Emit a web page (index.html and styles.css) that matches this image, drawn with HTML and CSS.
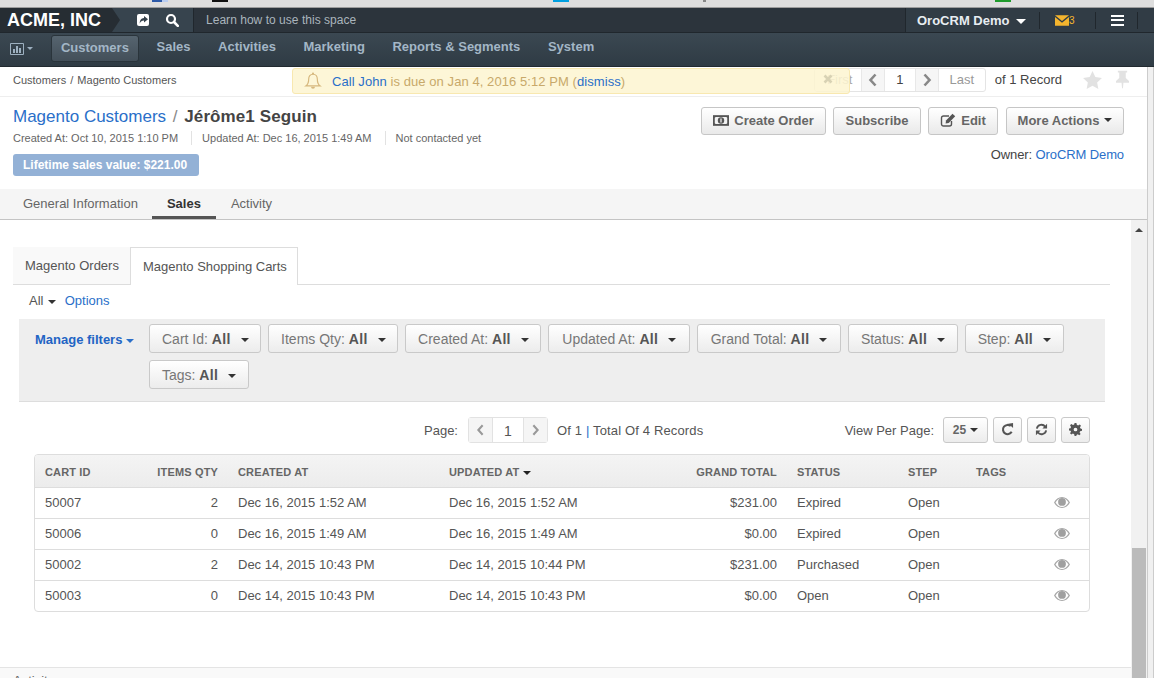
FILE: index.html
```html
<!DOCTYPE html>
<html lang="en">
<head>
  <meta charset="UTF-8">
  <meta name="viewport" content="width=device-width, initial-scale=1.0">
  <title>Magento Customers - Jérôme1 Seguin</title>
  <link rel="stylesheet" href="styles.css">
</head>
<body>
  <div class="browser-strip">
    <span class="strip-mark mark-blue"></span>
    <span class="strip-mark mark-black"></span>
    <span class="strip-mark mark-cyan"></span>
    <span class="strip-mark mark-grey"></span>
    <span class="strip-mark mark-green"></span>
  </div>

  <header class="topbar">
    <div class="logo">ACME, INC</div>
    <div class="quick-tools">
      <svg class="tool-icon" viewBox="0 0 14 14"><path fill="#fff" d="M3 1h8a2 2 0 0 1 2 2v8a2 2 0 0 1-2 2H3a2 2 0 0 1-2-2V3a2 2 0 0 1 2-2z"/><path fill="#36424c" d="M8 3l4 3.2L8 9.400V7.500C6 7.500 4.600 8.200 3.800 10.500 3.600 7.400 5 5 8 4.900z"/></svg>
      <svg class="tool-icon" viewBox="0 0 14 14"><circle cx="6" cy="6" r="4" fill="none" stroke="#fff" stroke-width="2.200"/><path d="M9 9l3.800 3.800" stroke="#fff" stroke-width="2.600" stroke-linecap="round"/></svg>
    </div>
    <div class="learn">Learn how to use this space</div>
    <div class="user-area">
      <div class="user-name">OroCRM Demo <span class="caret caret-white"></span></div>
      <div class="user-mail">
        <svg class="mail-icon" viewBox="0 0 16 12"><path fill="#f5b52e" d="M0 0h16L8 6.500zM0 2l8 6.500L16 2v10H0z"/></svg>
        <span class="mail-count">3</span>
      </div>
      <div class="user-menu">
        <span class="burger"></span>
      </div>
    </div>
  </header>

  <nav class="mainnav">
    <div class="nav-chart">
      <svg class="chart-icon" viewBox="0 0 14 12"><path fill="none" stroke="#9db0c0" d="M.5.500h13v11H.500z"/><path fill="#9db0c0" d="M3 6h2v4H3zM6 3h2v7H6zM9 5h2v5H9z"/></svg>
      <span class="caret caret-nav"></span>
    </div>
    <a class="nav-item nav-active">Customers</a>
    <a class="nav-item">Sales</a>
    <a class="nav-item">Activities</a>
    <a class="nav-item">Marketing</a>
    <a class="nav-item">Reports &amp; Segments</a>
    <a class="nav-item">System</a>
  </nav>

  <div class="page-row">
    <main class="page-main">
      <div class="crumb-row">
        <div class="crumbs">Customers <span class="crumb-sep">/</span> Magento Customers</div>
        <div class="rec-pager">
          <div class="rec-group">
            <span class="rec-cell rec-first">First</span>
            <span class="rec-cell rec-arrow"><svg class="chev" viewBox="0 0 10 14"><path d="M7.500 1.500L2.500 7l5 5.500" fill="none" stroke="#888" stroke-width="2.600"/></svg></span>
            <span class="rec-cell rec-num">1</span>
            <span class="rec-cell rec-arrow"><svg class="chev" viewBox="0 0 10 14"><path d="M2.500 1.500L7.500 7l-5 5.500" fill="none" stroke="#888" stroke-width="2.600"/></svg></span>
            <span class="rec-cell rec-last">Last</span>
          </div>
          <span class="rec-total">of 1 Record</span>
          <svg class="star-icon" viewBox="0 0 20 19"><path fill="#e2e2e2" d="M10 0l3 6.400 7 .9-5.100 4.800 1.300 6.900L10 15.600 3.800 19l1.300-6.900L0 7.300l7-.9z"/></svg>
          <svg class="pin-icon" viewBox="0 0 14 19"><path fill="#e2e2e2" d="M2 0h10v2h-1.500v6L14 11v2H8l-.5 6h-1L6 13H0v-2l3.500-3V2H2z"/></svg>
        </div>
        <div class="notice">
          <svg class="bell" viewBox="0 0 18 20"><path fill="none" stroke="#d6b77d" stroke-width="1.300" d="M9 2.500c3.200 0 4.800 2.300 4.800 5.500 0 4 1.200 6 3.200 7.500H1c2-1.500 3.200-3.500 3.200-7.500C4.200 4.800 5.800 2.500 9 2.500z"/><circle cx="9" cy="1.700" r="1.200" fill="#d6b77d"/><path fill="#d6b77d" d="M6.800 16.500h4.400a2.200 2.200 0 0 1-4.400 0z"/></svg>
          <span><a class="link">Call John</a> is due on Jan 4, 2016 5:12 PM (<a class="link">dismiss</a>)</span>
          <svg class="notice-close" viewBox="0 0 10 10"><path d="M1.500 1.500l7 7M8.500 1.500l-7 7" stroke="#d8d2b4" stroke-width="2.600"/></svg>
        </div>
      </div>

      <section class="title-block">
        <div class="title-left">
          <h1 class="page-title"><a class="link">Magento Customers</a> <span class="title-sep">/</span> <strong>Jérôme1 Seguin</strong></h1>
          <ul class="meta">
            <li>Created At: Oct 10, 2015 1:10 PM</li>
            <li>Updated At: Dec 16, 2015 1:49 AM</li>
            <li>Not contacted yet</li>
          </ul>
          <span class="sales-badge">Lifetime sales value: $221.00</span>
        </div>
        <div class="title-right">
          <div class="actions">
            <button class="btn btn-create">
              <svg class="btn-icon money" viewBox="0 0 18 12"><path fill="#555" d="M0 0h18v12H0z"/><path fill="#f2f2f2" d="M3 2h12l1 1v6l-1 1H3L2 9V3z"/><circle cx="9" cy="6" r="3.600" fill="#555"/><path fill="#f2f2f2" d="M8.300 3.800h1.400v4.400H8.300z"/></svg>
              Create Order
            </button>
            <button class="btn btn-subscribe">Subscribe</button>
            <button class="btn btn-edit">
              <svg class="btn-icon" viewBox="0 0 16 14"><path fill="none" stroke="#555" stroke-width="1.400" d="M11.500 8v3a2 2 0 0 1-2 2h-6a2 2 0 0 1-2-2V5a2 2 0 0 1 2-2H9"/><path fill="#555" d="M6 7.500L12.500.800l2.700 2.500L8.700 10 5.600 10.500z"/></svg>
              Edit
            </button>
            <button class="btn btn-more">More Actions <span class="caret caret-dark"></span></button>
          </div>
          <div class="owner">Owner: <a class="link">OroCRM Demo</a></div>
        </div>
      </section>

      <div class="section-tabs">
        <a class="section-tab">General Information</a>
        <a class="section-tab section-tab-active">Sales</a>
        <a class="section-tab">Activity</a>
      </div>

      <div class="scroll-row">
        <div class="scroll-content">
          <div class="sub-tabs">
            <a class="sub-tab">Magento Orders</a>
            <a class="sub-tab sub-tab-active">Magento Shopping Carts</a>
          </div>

          <div class="grid-toolbar">All <span class="caret caret-toolbar"></span> <a class="link options-link">Options</a></div>

          <div class="filter-bar">
            <a class="manage-filters">Manage filters <span class="caret caret-blue"></span></a>
            <div class="filter-list">
              <button class="filter-btn">Cart Id: <b>All</b><span class="caret caret-dark"></span></button>
              <button class="filter-btn">Items Qty: <b>All</b><span class="caret caret-dark"></span></button>
              <button class="filter-btn">Created At: <b>All</b><span class="caret caret-dark"></span></button>
              <button class="filter-btn filter-wide">Updated At: <b>All</b><span class="caret caret-dark"></span></button>
              <button class="filter-btn filter-wide">Grand Total: <b>All</b><span class="caret caret-dark"></span></button>
              <button class="filter-btn">Status: <b>All</b><span class="caret caret-dark"></span></button>
              <button class="filter-btn">Step: <b>All</b><span class="caret caret-dark"></span></button>
              <button class="filter-btn">Tags: <b>All</b><span class="caret caret-dark"></span></button>
            </div>
          </div>

          <div class="grid-pager">
            <span class="pager-label">Page:</span>
            <div class="pager-box">
              <span class="pager-arrow"><svg class="chev-sm" viewBox="0 0 10 14"><path d="M7.500 1.500L2.500 7l5 5.500" fill="none" stroke="#999" stroke-width="2.400"/></svg></span>
              <span class="pager-num">1</span>
              <span class="pager-arrow"><svg class="chev-sm" viewBox="0 0 10 14"><path d="M2.500 1.500L7.500 7l-5 5.500" fill="none" stroke="#999" stroke-width="2.400"/></svg></span>
            </div>
            <span class="pager-total">Of 1 <span class="pipe">|</span> Total Of 4 Records</span>
            <span class="per-page">View Per Page:</span>
            <button class="mini-btn per-btn">25 <span class="caret caret-dark"></span></button>
            <button class="mini-btn">
              <svg class="mini-icon" viewBox="0 0 14 14"><path fill="none" stroke="#555" stroke-width="2.200" d="M11.500 9.500A5 5 0 1 1 10.500 3.300"/><path fill="#555" d="M8 .8L13 0v5.500z"/></svg>
            </button>
            <button class="mini-btn">
              <svg class="mini-icon" viewBox="0 0 14 14"><path fill="none" stroke="#555" stroke-width="2" d="M2 6a5 5 0 0 1 9-2M12 8a5 5 0 0 1-9 2"/><path fill="#555" d="M13 .8v5H8zM1 13.200v-5h5z"/></svg>
            </button>
            <button class="mini-btn">
              <svg class="mini-icon" viewBox="0 0 14 14"><path fill="#555" fill-rule="evenodd" d="M6 0h2l.4 2 1.400.6L11.500 1.500 12.900 2.900 11.800 4.600l.6 1.400 1.600.4v2l-2 .4-.6 1.400 1.100 1.700-1.400 1.400-1.700-1.100-1.400.6L8 14H6l-.4-2-1.400-.6-1.700 1.100-1.400-1.400 1.100-1.700L1.600 8.400 0 8V6l1.600-.4.600-1.400-1.100-1.700L2.500 1.100l1.700 1.100 1.400-.6zM7 5a2 2 0 1 0 0 4 2 2 0 0 0 0-4z"/></svg>
            </button>
          </div>

          <div class="grid-wrap">
            <table class="grid">
              <colgroup>
                <col class="col-id"><col class="col-qty"><col class="col-created"><col class="col-updated"><col class="col-total"><col class="col-status"><col class="col-step"><col class="col-tags"><col class="col-action">
              </colgroup>
              <thead>
                <tr>
                  <th>Cart Id</th>
                  <th class="num">Items Qty</th>
                  <th>Created At</th>
                  <th>Updated At <span class="caret caret-black"></span></th>
                  <th class="num">Grand Total</th>
                  <th>Status</th>
                  <th>Step</th>
                  <th>Tags</th>
                  <th></th>
                </tr>
              </thead>
              <tbody>
                <tr>
                  <td>50007</td><td class="num">2</td><td>Dec 16, 2015 1:52 AM</td><td>Dec 16, 2015 1:52 AM</td><td class="num">$231.00</td><td>Expired</td><td>Open</td><td></td>
                  <td class="action"><svg class="eye" viewBox="0 0 16 11"><path fill="#a8a8a8" fill-rule="evenodd" d="M8 0c3.500 0 6.300 2.300 8 5.500C14.300 8.700 11.500 11 8 11S1.700 8.700 0 5.500C1.700 2.300 4.500 0 8 0zM8 1C5.300 1 3 2.800 1.500 5.500 3 8.200 5.300 10 8 10s5-1.800 6.500-4.500C13 2.800 10.700 1 8 1z"/><circle cx="8" cy="4.900" r="3.900" fill="#a0a0a0"/></svg></td>
                </tr>
                <tr>
                  <td>50006</td><td class="num">0</td><td>Dec 16, 2015 1:49 AM</td><td>Dec 16, 2015 1:49 AM</td><td class="num">$0.00</td><td>Expired</td><td>Open</td><td></td>
                  <td class="action"><svg class="eye" viewBox="0 0 16 11"><path fill="#a8a8a8" fill-rule="evenodd" d="M8 0c3.500 0 6.300 2.300 8 5.500C14.300 8.700 11.500 11 8 11S1.700 8.700 0 5.500C1.700 2.300 4.500 0 8 0zM8 1C5.300 1 3 2.800 1.500 5.500 3 8.200 5.300 10 8 10s5-1.800 6.500-4.500C13 2.800 10.700 1 8 1z"/><circle cx="8" cy="4.900" r="3.900" fill="#a0a0a0"/></svg></td>
                </tr>
                <tr>
                  <td>50002</td><td class="num">2</td><td>Dec 14, 2015 10:43 PM</td><td>Dec 14, 2015 10:44 PM</td><td class="num">$231.00</td><td>Purchased</td><td>Open</td><td></td>
                  <td class="action"><svg class="eye" viewBox="0 0 16 11"><path fill="#a8a8a8" fill-rule="evenodd" d="M8 0c3.500 0 6.300 2.300 8 5.500C14.300 8.700 11.500 11 8 11S1.700 8.700 0 5.500C1.700 2.300 4.500 0 8 0zM8 1C5.300 1 3 2.800 1.500 5.500 3 8.200 5.300 10 8 10s5-1.800 6.500-4.500C13 2.800 10.700 1 8 1z"/><circle cx="8" cy="4.900" r="3.900" fill="#a0a0a0"/></svg></td>
                </tr>
                <tr>
                  <td>50003</td><td class="num">0</td><td>Dec 14, 2015 10:43 PM</td><td>Dec 14, 2015 10:43 PM</td><td class="num">$0.00</td><td>Open</td><td>Open</td><td></td>
                  <td class="action"><svg class="eye" viewBox="0 0 16 11"><path fill="#a8a8a8" fill-rule="evenodd" d="M8 0c3.500 0 6.300 2.300 8 5.500C14.300 8.700 11.500 11 8 11S1.700 8.700 0 5.500C1.700 2.300 4.500 0 8 0zM8 1C5.300 1 3 2.800 1.500 5.500 3 8.200 5.300 10 8 10s5-1.800 6.500-4.500C13 2.800 10.700 1 8 1z"/><circle cx="8" cy="4.900" r="3.900" fill="#a0a0a0"/></svg></td>
                </tr>
              </tbody>
            </table>
          </div>

          <div class="next-section">Activity</div>
        </div>

        <div class="inner-scrollbar">
          <span class="scroll-up"></span>
          <span class="scroll-thumb"></span>
        </div>
      </div>
    </main>
    <div class="outer-scrollbar"></div>
  </div>
</body>
</html>
```

FILE: styles.css
```css
:root {
  --link: #2a6fc9;
  --text: #555;
  --line: #ddd;
  --bar-dark: #2c343c;
  --bar-mid: #37444e;
}

* {
  box-sizing: border-box;
  margin: 0;
  padding: 0;
}

html, body {
  height: 678px;
  overflow: hidden;
}

body {
  display: flex;
  flex-direction: column;
  font-family: "Liberation Sans", Arial, sans-serif;
  font-size: 13px;
  color: var(--text);
  background: #fff;
}

.link {
  color: var(--link);
  text-decoration: none;
}

.caret {
  display: inline-block;
  width: 0;
  height: 0;
  border-left: 4px solid transparent;
  border-right: 4px solid transparent;
  border-top: 4px solid #333;
  vertical-align: middle;
}

.caret-white { border-top-color: #fff; border-width: 5px 5px 0; margin-left: 3px; }
.caret-nav { border-top-color: #9db0c0; border-width: 3px 3px 0; }
.caret-blue { border-top-color: var(--link); border-width: 4px 4.500px 0; }
.caret-dark { border-top-color: #333; }
.caret-toolbar { border-top-color: #333; border-width: 4px 4.500px 0; margin-left: 1px; }
.caret-black { border-top-color: #222; }

/* browser strip */
.browser-strip {
  flex: none;
  height: 8px;
  display: flex;
  background: #dedede;
  border-bottom: 1px solid #9d9d9d;
}

.strip-mark { width: 16px; height: 2px; }
.mark-blue { margin-left: 152px; background: linear-gradient(to right, #2d5aa8 60%, #b9cdf0 60%); }
.mark-black { margin-left: 44px; background: #111; }
.mark-cyan { margin-left: 325px; background: #009fe0; }
.mark-grey { margin-left: 134px; width: 3px; background: #888; }
.mark-green { margin-left: 289px; background: #1f9b2c; }

/* top bar */
.topbar {
  flex: none;
  height: 25px;
  display: flex;
  align-items: stretch;
  background: var(--bar-dark);
  border-bottom: 1px solid #20272d;
}

.logo {
  position: relative;
  width: 112px;
  padding-left: 7px;
  font-size: 18px;
  font-weight: bold;
  line-height: 24px;
  color: #fff;
  white-space: nowrap;
  background: #262d33;
}

.logo::after {
  content: "";
  position: absolute;
  left: 100%;
  top: 0;
  border-left: 8px solid #262d33;
  border-top: 12px solid transparent;
  border-bottom: 12px solid transparent;
}

.quick-tools {
  width: 82px;
  display: flex;
  align-items: center;
  gap: 15px;
  padding-left: 24px;
  background: var(--bar-mid);
  border-right: 1px solid #20272d;
}

.tool-icon { width: 14px; height: 14px; }

.learn {
  flex: 1;
  padding-left: 12px;
  font-size: 12px;
  line-height: 24px;
  letter-spacing: .03px;
  color: #aab4bc;
}

.user-area {
  display: flex;
  align-items: center;
  width: 249px;
  background: #313c45;
  border-left: 1px solid #20272d;
}

.user-name {
  width: 133px;
  padding-left: 11px;
  font-weight: bold;
  font-size: 13px;
  color: #e8edf1;
  white-space: nowrap;
}

.user-mail {
  width: 56px;
  height: 17px;
  display: flex;
  align-items: center;
  padding-left: 15px;
  border-left: 1px solid #20272d;
}

.mail-icon { width: 14px; height: 11px; }

.mail-count {
  font-size: 10px;
  color: #f5b52e;
}

.user-menu {
  width: 43px;
  height: 17px;
  padding-left: 15px;
  border-left: 1px solid #20272d;
  border-right: 1px solid #20272d;
  display: flex;
  align-items: center;
}

.burger {
  display: block;
  width: 13px;
  height: 11px;
  border-top: 2px solid #fff;
  border-bottom: 2px solid #fff;
  background: linear-gradient(#fff, #fff) center / 100% 2px no-repeat;
}

/* main nav */
.mainnav {
  flex: none;
  height: 34px;
  display: flex;
  align-items: flex-start;
  gap: 7.600px;
  padding: 2px 0 0 10px;
  background: linear-gradient(#3b4852, #2f3b44);
  border-bottom: 1px solid #222a30;
}

.nav-chart {
  width: 33.400px;
  height: 27px;
  display: flex;
  align-items: center;
  gap: 3px;
}

.chart-icon { width: 14px; height: 12px; }

.nav-item {
  padding: 0 10px;
  height: 27px;
  line-height: 24px;
  font-weight: bold;
  font-size: 13px;
  color: #a3b6c6;
  white-space: nowrap;
}

.nav-active {
  background: linear-gradient(#56646f, #434f59);
  border: 1px solid #2a343b;
  border-radius: 3px;
  padding: 0 9px;
}

/* page */
.page-row {
  flex: 1;
  min-height: 0;
  display: flex;
}

.page-main {
  width: 1147px;
  display: flex;
  flex-direction: column;
  min-height: 0;
}

.outer-scrollbar {
  flex: 1;
  background: #f0f0f0;
  border-left: 1px solid #ccc;
  border-right: 1px solid #ccc;
}

.crumb-row {
  position: relative;
  flex: none;
  height: 30px;
  display: flex;
  align-items: center;
  justify-content: space-between;
  padding: 0 0 4px 13px;
  border-bottom: 1px solid #eee;
}

.crumbs {
  font-size: 11px;
  color: #555;
}

.crumb-sep { margin: 0 1px; }

.rec-pager {
  display: flex;
  align-items: center;
  padding-right: 18px;
}

.rec-group {
  display: flex;
  height: 24px;
  border: 1px solid #e4e4e4;
  border-radius: 3px;
  color: #aaa;
}

.rec-cell {
  display: flex;
  align-items: center;
  justify-content: center;
  height: 22px;
  border-left: 1px solid #e8e8e8;
  font-size: 13px;
}

.rec-first { width: 46px; padding-left: 4px; border-left: 0; }
.rec-arrow { width: 23px; background: #f6f6f6; }
.rec-num { width: 31px; color: #444; background: #fff; }
.rec-last { width: 47px; color: #999; }

.chev { width: 10px; height: 14px; }
.chev-sm { width: 9px; height: 12px; }

.rec-total {
  margin-left: 9px;
  font-size: 13px;
  color: #444;
  white-space: nowrap;
}

.star-icon { width: 19px; height: 18px; margin-left: 21px; }
.pin-icon { width: 13px; height: 19px; margin-left: 14px; }

.notice {
  position: absolute;
  left: 292px;
  top: 1px;
  width: 558px;
  height: 26px;
  display: flex;
  align-items: center;
  padding-left: 11px;
  gap: 10px;
  font-size: 13px;
  letter-spacing: .07px;
  color: #c8a96a;
  background: rgba(253, 244, 208, .86);
  border: 1px solid #f8e8b0;
  border-radius: 3px;
}

.bell { width: 18px; height: 18px; flex: none; }

.notice-close {
  position: absolute;
  right: 16px;
  top: 5px;
  width: 10px;
  height: 10px;
}

.title-block {
  flex: none;
  height: 92px;
  display: flex;
  justify-content: space-between;
  padding: 10px 23px 0 13px;
}

.page-title {
  font-size: 17px;
  font-weight: normal;
  line-height: 20px;
}

.page-title strong {
  color: #444;
  letter-spacing: .1px;
}

.title-sep { color: #888; margin: 0 2px; }

.meta {
  display: flex;
  list-style: none;
  margin-top: 4px;
  font-size: 11px;
  line-height: 14px;
  color: #666;
}

.meta li + li {
  margin-left: 13px;
  padding-left: 10px;
  border-left: 1px solid #e2e2e2;
}

.sales-badge {
  display: block;
  width: 186px;
  height: 22px;
  margin-top: 9px;
  padding-left: 10px;
  font-size: 12px;
  font-weight: bold;
  line-height: 22px;
  color: #fff;
  background: #93b1d6;
  border-radius: 3px;
  white-space: nowrap;
}

.title-right {
  display: flex;
  flex-direction: column;
  align-items: flex-end;
}

.actions {
  display: flex;
  gap: 7px;
}

.btn {
  height: 28px;
  padding-bottom: 2px;
  font-family: inherit;
  font-size: 13px;
  font-weight: bold;
  color: #666;
  background: linear-gradient(#fff, #e9e9e9);
  border: 1px solid #c6c6c6;
  border-radius: 3px;
  display: flex;
  align-items: center;
  justify-content: center;
  gap: 5px;
  white-space: nowrap;
}

.btn-create { width: 125px; }
.btn-subscribe { width: 88px; }
.btn-edit { width: 70px; }
.btn-more { width: 118px; margin-left: 1px; }

.btn-icon { flex: none; width: 16px; height: 14px; }
.btn-icon.money { height: 11px; }

.owner {
  margin-top: 12px;
  font-size: 13px;
  letter-spacing: -.1px;
  color: #444;
}

.section-tabs {
  flex: none;
  height: 31px;
  display: flex;
  padding-left: 8px;
  background: #f5f5f5;
  border-bottom: 1px solid #c4c4c4;
}

.section-tab {
  height: 30px;
  padding: 0 15px;
  line-height: 30px;
  font-size: 13px;
  color: #666;
  white-space: nowrap;
}

.section-tab-active {
  margin-left: -1px;
  font-weight: bold;
  color: #333;
  border-bottom: 3px solid #555;
}

.scroll-row {
  flex: 1;
  min-height: 0;
  display: flex;
}

.scroll-content {
  flex: 1;
  min-width: 0;
  padding-top: 27px;
  display: flex;
  flex-direction: column;
}

.inner-scrollbar {
  width: 16px;
  display: flex;
  flex-direction: column;
  align-items: center;
  background: #f1f1f1;
}

.scroll-up {
  margin-top: 8px;
  border-left: 4px solid transparent;
  border-right: 4px solid transparent;
  border-bottom: 4px solid #444;
}

.scroll-thumb {
  margin-top: auto;
  width: 14px;
  height: 130px;
  background: #bbb;
}

.sub-tabs {
  flex: none;
  height: 38px;
  margin: 0 21px 0 13px;
  display: flex;
  border-bottom: 1px solid var(--line);
}

.sub-tab {
  width: 117px;
  height: 37px;
  padding-left: 12px;
  font-size: 13px;
  line-height: 37px;
  color: #555;
  background: #f9f9f9;
  white-space: nowrap;
}

.sub-tab-active {
  width: 168px;
  height: 38px;
  background: #fff;
  border: 1px solid var(--line);
  border-bottom: 0;
}

.grid-toolbar {
  flex: none;
  height: 34px;
  padding-left: 29px;
  line-height: 32px;
  color: #555;
}

.options-link { margin-left: 5px; }

.filter-bar {
  flex: none;
  width: 1086px;
  height: 83px;
  margin-left: 19px;
  display: flex;
  padding: 5px 0 0 16px;
  background: #eee;
  border-bottom: 1px solid var(--line);
}

.manage-filters {
  flex: none;
  width: 114px;
  font-weight: bold;
  font-size: 13px;
  line-height: 31px;
  color: #2264c4;
}

.filter-list {
  display: flex;
  flex-wrap: wrap;
  gap: 7px;
  align-content: flex-start;
}

.filter-btn {
  height: 29px;
  padding: 0 11.500px 0 12px;
  font-family: inherit;
  font-size: 14px;
  color: #777;
  background: linear-gradient(#fff, #ececec);
  border: 1px solid #c9c9c9;
  border-radius: 3px;
  white-space: nowrap;
}

.filter-wide { padding-left: 13px; padding-right: 12.500px; }
.filter-btn b { color: #555; letter-spacing: .3px; }
.filter-btn .caret { margin-left: 10px; border-width: 4px 4.500px 0; }

.grid-pager {
  flex: none;
  width: 1090px;
  height: 52px;
  display: flex;
  align-items: center;
  padding: 3px 0 0 424px;
}

.pager-label { width: 44px; padding-top: 2px; }

.pager-box {
  width: 80px;
  height: 26px;
  display: flex;
  border: 1px solid #e2e2e2;
  border-radius: 3px;
}

.pager-arrow {
  width: 23px;
  display: flex;
  align-items: center;
  justify-content: center;
  background: #f5f5f5;
}

.pager-num {
  flex: 1;
  text-align: center;
  line-height: 26px;
  font-size: 14px;
  border-left: 1px solid #e2e2e2;
  border-right: 1px solid #e2e2e2;
}

.pager-total { margin-left: 9px; padding-top: 2px; letter-spacing: .15px; white-space: nowrap; }
.pipe { color: var(--link); }

.per-page { margin-left: auto; margin-right: 9px; padding-top: 2px; white-space: nowrap; }

.mini-btn {
  width: 29px;
  height: 26px;
  margin-left: 5px;
  font-family: inherit;
  font-size: 12px;
  font-weight: bold;
  color: #666;
  background: linear-gradient(#fff, #ececec);
  border: 1px solid #c9c9c9;
  border-radius: 3px;
  display: flex;
  align-items: center;
  justify-content: center;
}

.per-btn { width: 45px; margin-left: 0; gap: 4px; }
.mini-icon { width: 13px; height: 13px; }

.grid-wrap {
  flex: none;
  width: 1056px;
  margin-left: 34px;
  border: 1px solid var(--line);
  border-radius: 4px;
  overflow: hidden;
}

.grid {
  width: 1054px;
  table-layout: fixed;
  border-collapse: collapse;
}

.col-id { width: 95px; }
.col-qty { width: 98px; }
.col-created { width: 211px; }
.col-updated { width: 161px; }
.col-total { width: 187px; }
.col-status { width: 111px; }
.col-step { width: 68px; }
.col-tags { width: 74px; }
.col-action { width: 49px; }

.grid th {
  height: 32px;
  padding: 2px 10px 0;
  text-align: left;
  font-size: 11px;
  font-weight: bold;
  text-transform: uppercase;
  letter-spacing: .15px;
  color: #666;
  background: linear-gradient(#f4f4f4, #ececec);
  border-bottom: 1px solid var(--line);
  white-space: nowrap;
}

.grid td {
  height: 31px;
  padding: 0 10px;
  font-size: 13px;
  color: #555;
  border-bottom: 1px solid var(--line);
  white-space: nowrap;
}

.grid tr:last-child td { border-bottom: 0; }
.grid .num { text-align: right; }
.grid .action { padding: 0 0 0 14px; }

.eye { display: block; width: 16px; height: 11px; }

.next-section {
  flex: 1;
  margin-top: 55px;
  padding: 5px 0 0 13px;
  font-size: 13px;
  color: #666;
  background: #f9f9f9;
  border-top: 1px solid #e4e4e4;
}
```
